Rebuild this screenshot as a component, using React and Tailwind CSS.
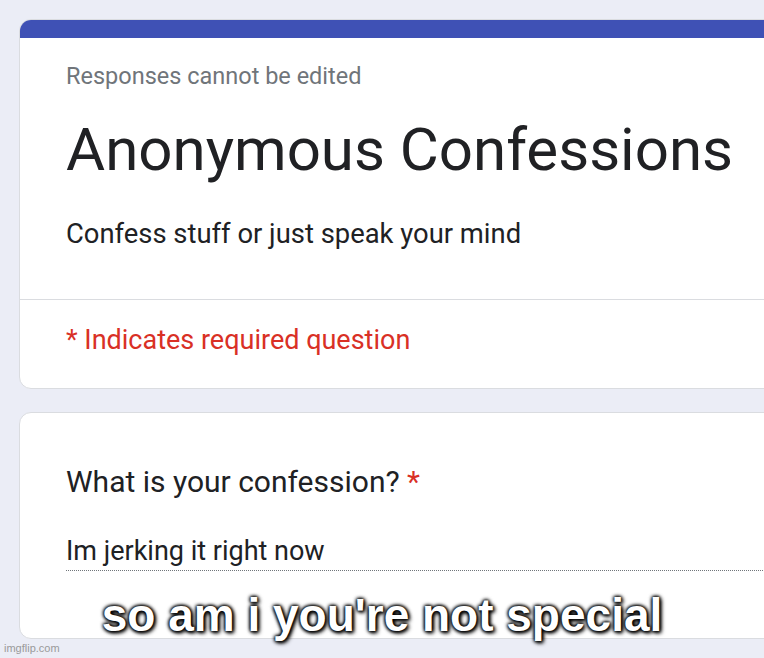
export default function App() {
  return (
    <div className="relative w-[764px] h-[658px] overflow-hidden bg-[#ebedf6] font-['Roboto',sans-serif]">
      <div className="w-[820px] pt-[19px] pl-[19px]">
        <div className="rounded-[12px] overflow-hidden bg-white border border-[#dadce0]">
          <div className="h-[19px] bg-[#3f51b5] -mx-px -mt-px"></div>
          <div className="pl-[46px] pt-[24px] pb-[47px] border-b border-[#dadce0]">
            <p className="text-[23.5px] leading-[28px] text-[#70757a]">Responses cannot be edited</p>
            <h1 className="mt-[24px] text-[60px] leading-[72px] text-[#202124]">Anonymous Confessions</h1>
            <p className="mt-[30px] text-[27.4px] leading-[36px] text-[#202124]">Confess stuff or just speak your mind</p>
          </div>
          <div className="pl-[46px] pt-[22px] pb-[30px]">
            <p className="text-[27px] leading-[36px] text-[#d93025]">* Indicates required question</p>
          </div>
        </div>

        <div className="mt-[23px] h-[227px] rounded-[12px] bg-white border border-[#dadce0] pl-[46px] pt-[49px]">
          <p className="text-[30px] leading-[40px] text-[#202124]">
            What is your confession? <span className="text-[#d93025]">*</span>
          </p>
          <div className="mt-[32px] border-b border-dotted border-[#70757a] pb-[2px]">
            <p className="text-[27px] leading-[34px] text-[#202124]">Im jerking it right now</p>
          </div>
        </div>
      </div>

      <p className="absolute left-[4px] bottom-[3px] text-[11px] leading-[13px] text-[#9a9a9a] font-['Liberation_Sans',sans-serif]">imgflip.com</p>

      <p className="absolute left-0 right-0 top-[589px] text-center text-[46px] leading-[52px] font-bold text-white font-['Liberation_Sans',Arial,sans-serif] [text-shadow:0_0_4px_#000,0_0_4px_#000,0_0_3px_#000,2px_2px_4px_#000]">
        so am i you're not special
      </p>
    </div>
  )
}
